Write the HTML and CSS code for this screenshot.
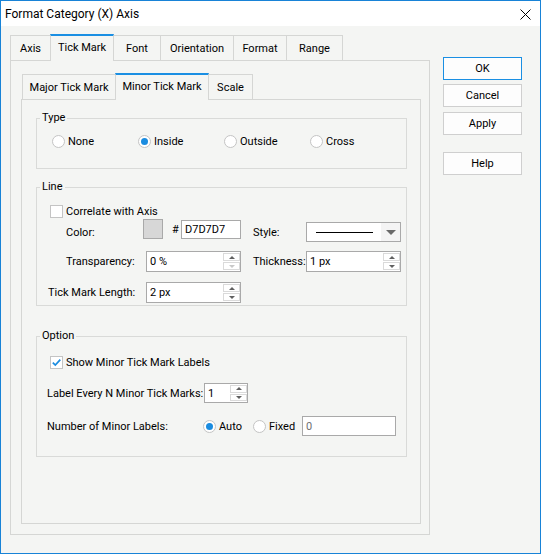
FILE: index.html
```html
<!DOCTYPE html>
<html>
<head>
<meta charset="utf-8">
<link rel="stylesheet" href="styles.css">
</head>
<body>
<div class="window">
  <div class="titlebar">
    <span class="title">Format Category (X) Axis</span>
    <svg class="close" width="11" height="11" viewBox="0 0 11 11"><path d="M0.5 0.5 L10.5 10.5 M10.5 0.5 L0.5 10.5" stroke="#000" stroke-width="1" fill="none"/></svg>
  </div>
  <div class="client">
    <div class="main">
      <div class="tabs outer-tabs">
        <div class="tab w-axis">Axis</div>
        <div class="tab active w-tick">Tick Mark</div>
        <div class="tab w-font">Font</div>
        <div class="tab w-orient">Orientation</div>
        <div class="tab w-format">Format</div>
        <div class="tab w-range">Range</div>
      </div>
      <div class="panel outer-panel">
        <div class="tabs inner-tabs">
          <div class="tab w-major">Major Tick Mark</div>
          <div class="tab active w-minor">Minor Tick Mark</div>
          <div class="tab w-scale">Scale</div>
        </div>
        <div class="panel inner-panel">
          <fieldset class="group type-group">
            <legend>Type</legend>
            <div class="radio-row">
              <label class="radio"><span class="circle"></span>None</label>
              <label class="radio"><span class="circle on"></span>Inside</label>
              <label class="radio"><span class="circle"></span>Outside</label>
              <label class="radio"><span class="circle"></span>Cross</label>
            </div>
          </fieldset>

          <fieldset class="group line-group">
            <legend>Line</legend>
            <div class="row row-check">
              <label class="check"><span class="box"></span>Correlate with Axis</label>
            </div>
            <div class="row row-color">
              <span class="lbl l-color">Color:</span>
              <span class="swatch"></span>
              <span class="hash">#</span>
              <span class="field f-hex">D7D7D7</span>
              <span class="lbl l-style">Style:</span>
              <span class="combo">
                <span class="combo-val"><span class="line-sample"></span></span>
                <span class="combo-btn"><span class="tri-down"></span></span>
              </span>
            </div>
            <div class="row row-trans">
              <span class="lbl l-trans">Transparency:</span>
              <span class="field spin f-95">
                <span class="val">0 %</span>
                <span class="spinbox"><span class="sb"><span class="tri-up"></span></span><span class="sb"><span class="tri-dn off"></span></span></span>
              </span>
              <span class="lbl l-style">Thickness:</span>
              <span class="field spin f-95">
                <span class="val">1 px</span>
                <span class="spinbox"><span class="sb"><span class="tri-up"></span></span><span class="sb"><span class="tri-dn"></span></span></span>
              </span>
            </div>
            <div class="row row-len">
              <span class="lbl l-len">Tick Mark Length:</span>
              <span class="field spin f-95">
                <span class="val">2 px</span>
                <span class="spinbox"><span class="sb"><span class="tri-up"></span></span><span class="sb"><span class="tri-dn"></span></span></span>
              </span>
            </div>
          </fieldset>

          <fieldset class="group option-group">
            <legend>Option</legend>
            <div class="row row-check2">
              <label class="check"><span class="box"><svg width="11" height="11" viewBox="0 0 11 11"><path d="M1.8 5.6 L4.3 8.1 L9.3 2.6" stroke="#1a8ce0" stroke-width="1.7" fill="none"/></svg></span>Show Minor Tick Mark Labels</label>
            </div>
            <div class="row row-every">
              <span class="lbl l-every">Label Every N Minor Tick Marks:</span>
              <span class="field spin f-44">
                <span class="val">1</span>
                <span class="spinbox"><span class="sb"><span class="tri-up"></span></span><span class="sb"><span class="tri-dn"></span></span></span>
              </span>
            </div>
            <div class="row row-num">
              <span class="lbl l-num">Number of Minor Labels:</span>
              <label class="radio r-auto"><span class="circle on"></span>Auto</label>
              <label class="radio r-fixed"><span class="circle"></span>Fixed</label>
              <span class="field f-fixed"><span class="val grey">0</span></span>
            </div>
          </fieldset>
        </div>
      </div>
    </div>
    <div class="buttons">
      <div class="btn default b-ok">OK</div>
      <div class="btn b-cancel">Cancel</div>
      <div class="btn b-apply">Apply</div>
      <div class="btn b-help">Help</div>
    </div>
  </div>
</div>
</body>
</html>
```

FILE: styles.css
```css
* { box-sizing: border-box; }
html, body { margin: 0; padding: 0; background: #f4f5f3; }
body {
  font-family: Roboto, "Liberation Sans", sans-serif;
  font-size: 11px;
  color: #000;
}
.window {
  width: 541px;
  height: 554px;
  border: 1px solid #1883d7;
  background: #f4f5f3;
  display: flex;
  flex-direction: column;
}
.titlebar {
  height: 25px;
  background: #fff;
  display: flex;
  align-items: center;
  padding-left: 4px;
  font-size: 12px;
  flex-shrink: 0;
}
.title { flex: 1; padding-top: 1px; }
.close { margin-right: 9px; margin-top: 1px; }

.client { display: flex; flex: 1; }
.main { margin-left: 9px; padding-top: 8px; }

.tabs { display: flex; align-items: flex-end; }
.outer-tabs { height: 26px; }
.inner-tabs { height: 26px; margin-left: 1px; }
.tab {
  height: 25px;
  border: 1px solid #d5d6d4;
  border-bottom: none;
  margin-left: -1px;
  display: flex;
  align-items: center;
  justify-content: center;
  background: #f4f5f3;
  white-space: nowrap;
  padding-top: 1px;
}
.tab:first-child { margin-left: 0; }
.tab.active {
  height: 27px;
  margin-bottom: -1px;
  border-top: 2px solid #1a8fe3;
  position: relative;
  z-index: 1;
  padding-top: 0;
  padding-bottom: 2px;
}
.w-axis { width: 41px; }
.w-tick { width: 64px; }
.w-font { width: 48px; }
.w-orient { width: 74px; }
.w-format { width: 54px; }
.w-range { width: 57px; }
.w-major { width: 94px; }
.w-minor { width: 94px; }
.w-scale { width: 45px; }

.panel { border: 1px solid #d5d6d4; background: #f4f5f3; }
.outer-panel {
  width: 420px;
  height: 475px;
  padding: 12px 0 0 10px;
}
.inner-panel {
  width: 400px;
  height: 425px;
  padding: 10px 0 0 14px;
}

.group {
  margin: 0;
  padding: 0;
  min-width: 0;
  width: 371px;
  border: 1px solid #d9dad8;
}
.group legend {
  padding: 0 2px;
  margin-left: 3px;
  line-height: 16px;
  height: 16px;
}
.line-group { margin-top: 10px; }
.option-group { margin-top: 22px; }

.radio-row {
  display: grid;
  grid-template-columns: repeat(4, 86px);
  margin: 7px 0 19px 15px;
  height: 16px;
}
.radio {
  display: flex;
  align-items: center;
  height: 16px;
  white-space: nowrap;
}
.circle {
  width: 13px;
  height: 13px;
  border-radius: 50%;
  border: 1px solid #c4c4c4;
  background: #fff;
  margin-right: 3px;
  display: flex;
  align-items: center;
  justify-content: center;
  flex-shrink: 0;
}
.circle.on::after {
  content: "";
  width: 7px;
  height: 7px;
  border-radius: 50%;
  background: #1a8ce0;
}

.row { display: flex; align-items: center; white-space: nowrap; }
.row-check { margin-top: 8px; height: 16px; padding-left: 13px; }
.check { display: flex; align-items: center; }
.box {
  width: 13px;
  height: 13px;
  border: 1px solid #c4c4c4;
  background: #fff;
  margin-right: 3px;
  display: flex;
  align-items: center;
  justify-content: center;
}
.row-color {
  height: 24px;
  padding-left: 29px;
  align-items: flex-start;
}
.row-color .lbl { margin-top: 6px; line-height: 16px; }
.l-color { width: 77px; }
.swatch {
  width: 20px;
  height: 20px;
  background: #d7d7d7;
  border: 1px solid #a9a9a9;
}
.hash { margin-left: 9px; width: 9px; margin-top: 3px; line-height: 16px; }
.field {
  height: 21px;
  border: 1px solid #a9a9a9;
  background: #fff;
  display: flex;
  align-items: center;
  padding-left: 3px;
}
.f-hex { width: 60px; height: 19px; margin-top: 1px; }
.l-style { width: 53px; margin-left: 12px; }
.combo {
  width: 95px;
  height: 20px;
  margin-top: 3px;
  border: 1px solid #a9a9a9;
  background: #fff;
  display: flex;
}
.combo-val { flex: 1; display: flex; align-items: center; padding-left: 9px; }
.line-sample { width: 57px; height: 1px; background: #000; }
.combo-btn {
  width: 19px;
  background: #f4f4f4;
  display: flex;
  align-items: center;
  justify-content: center;
}
.tri-down {
  width: 0; height: 0;
  border-left: 5px solid transparent;
  border-right: 5px solid transparent;
  border-top: 5px solid #6a6a6a;
}

.row-trans { margin-top: 8px; height: 21px; padding-left: 29px; }
.l-trans { width: 80px; }
.f-95 { width: 95px; }
.row-len { margin-top: 10px; height: 21px; padding-left: 11px; }
.l-len { width: 98px; }
.line-group .row-len { margin-bottom: 2px; }

.spin { padding-right: 0; }
.val { flex: 1; }
.grey { color: #707070; }
.spinbox {
  width: 17px;
  align-self: stretch;
  display: flex;
  flex-direction: column;
  padding: 1px 0 1px 0;
  gap: 1px;
}
.sb {
  flex: 1;
  border: 1px solid #dadada;
  display: flex;
  align-items: center;
  justify-content: center;
}
.tri-up {
  width: 0; height: 0;
  border-left: 3px solid transparent;
  border-right: 3px solid transparent;
  border-bottom: 3px solid #606060;
}
.tri-dn {
  width: 0; height: 0;
  border-left: 3px solid transparent;
  border-right: 3px solid transparent;
  border-top: 3px solid #606060;
}
.tri-dn.off { border-top-color: #c8c8c8; }

.row-check2 { margin-top: 10px; height: 16px; padding-left: 13px; }
.row-every { margin-top: 13px; height: 20px; padding-left: 10px; }
.l-every { width: 157px; }
.f-44 { width: 44px; height: 20px; }
.row-num { margin-top: 13px; height: 20px; padding-left: 10px; margin-bottom: 20px; }
.l-num { width: 156px; }
.r-auto { width: 50px; }
.r-fixed { width: 49px; }
.f-fixed { width: 94px; height: 20px; }

.buttons {
  margin-left: 13px;
  padding-top: 31px;
  display: flex;
  flex-direction: column;
}
.btn {
  width: 79px;
  height: 23px;
  border: 1px solid #cfcfcf;
  background: #fdfdfd;
  display: flex;
  align-items: center;
  justify-content: center;
}
.btn.default { border-color: #1a8fe3; }
.b-cancel { margin-top: 4px; }
.b-apply { margin-top: 5px; }
.b-help { margin-top: 17px; }
```
